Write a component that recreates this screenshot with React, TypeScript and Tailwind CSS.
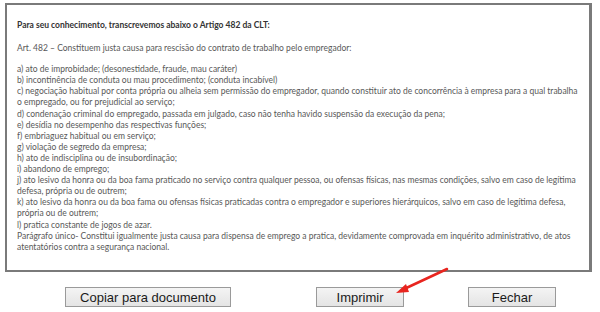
import { Fragment } from "react";

const lines: { text: string; gap?: boolean }[] = [
  { text: "a) ato de improbidade; (desonestidade, fraude, mau caráter)" },
  { text: "b) incontinência de conduta ou mau procedimento; (conduta incabível)" },
  {
    text: "c) negociação habitual por conta própria ou alheia sem permissão do empregador, quando constituir ato de concorrência à empresa para a qual trabalha",
  },
  { text: "o empregado, ou for prejudicial ao serviço;" },
  { text: "d) condenação criminal do empregado, passada em julgado, caso não tenha havido suspensão da execução da pena;" },
  { text: "e) desídia no desempenho das respectivas funções;" },
  { text: "f) embriaguez habitual ou em serviço;" },
  { text: "g) violação de segredo da empresa;" },
  { text: "h) ato de indisciplina ou de insubordinação;" },
  { text: "i) abandono de emprego;" },
  {
    text: "j) ato lesivo da honra ou da boa fama praticado no serviço contra qualquer pessoa, ou ofensas físicas, nas mesmas condições, salvo em caso de legítima",
  },
  { text: "defesa, própria ou de outrem;" },
  {
    text: "k) ato lesivo da honra ou da boa fama ou ofensas físicas praticadas contra o empregador e superiores hierárquicos, salvo em caso de legítima defesa,",
  },
  { text: "própria ou de outrem;" },
  { text: "l) pratica constante de jogos de azar." },
  {
    text: "Parágrafo único- Constitui igualmente justa causa para dispensa de emprego a pratica, devidamente comprovada em inquérito administrativo, de atos",
  },
  { text: "atentatórios contra a segurança nacional." },
];

function Button({ label, className }: { label: string; className: string }) {
  return (
    <button
      className={`h-[20px] border border-[#9a9a9a] bg-gradient-to-b from-[#f4f4f4] to-[#e4e4e4] font-['Liberation_Sans',Arial,sans-serif] text-[13px] leading-none text-[#1a1a1a] ${className}`}
    >
      {label}
    </button>
  );
}

export default function App() {
  return (
    <div className="relative h-[312px] w-[600px] overflow-hidden bg-white">
      <div className="ml-[5px] mt-[3px] h-[269px] w-[587px] border-b-2 border-l-2 border-r-[3px] border-t-2 border-[#7a7a7a] px-[10px] pt-[15px] font-['Lato','Open_Sans',sans-serif] text-[8.5px] leading-[11.1px] text-[#585858]">
        <p className="font-bold text-[#333]">Para seu conhecimento, transcrevemos abaixo o Artigo 482 da CLT:</p>
        <p className="mt-[12px]">Art. 482 – Constituem justa causa para rescisão do contrato de trabalho pelo empregador:</p>
        <div className="mt-[10px]">
          {lines.map((l, i) => (
            <Fragment key={i}>
              <p className="whitespace-nowrap">{l.text}</p>
            </Fragment>
          ))}
        </div>
      </div>

      <div className="mt-[15px] flex">
        <Button label="Copiar para documento" className="ml-[65px] w-[166px]" />
        <Button label="Imprimir" className="ml-[85px] w-[88px]" />
        <Button label="Fechar" className="ml-[64px] w-[88px]" />
      </div>

      {/* red arrow pointing at Imprimir */}
      <svg className="absolute left-0 top-0" width="600" height="312" viewBox="0 0 600 312">
        <line x1="447" y1="269" x2="402" y2="290" stroke="#e8251f" strokeWidth="2.5" strokeLinecap="round" />
        <polygon points="396,293 406,284 409,292" fill="#e8251f" />
      </svg>
    </div>
  );
}
